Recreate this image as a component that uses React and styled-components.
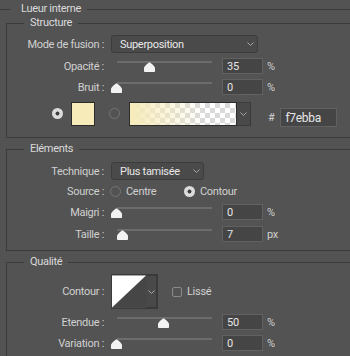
import React from 'react';
import styled, { createGlobalStyle } from 'styled-components';

const GlobalStyle = createGlobalStyle`
  html, body {
    margin: 0;
    background: #535353;
    overflow: hidden;
  }
  body {
    font-family: Roboto, "Liberation Sans", sans-serif;
    font-size: 11px;
    letter-spacing: -0.3px;
    color: #d0d0d0;
  }
`;

const Panel = styled.div`
  width: 350px;
  height: 356px;
  overflow: hidden;
`;

const Outer = styled.fieldset`
  margin: 2px 0 0 -1px;
  padding: 0 0 0 6px;
  min-width: 0;
  border: 1px solid #3b3b3b;
  border-right: none;
  border-bottom: none;
`;

const Group = styled.fieldset`
  margin: ${({ $first }) => ($first ? 0 : 4)}px 0 0;
  padding: ${({ $pt }) => $pt}px 0 ${({ $pb }) => $pb}px;
  min-width: 0;
  border: 1px solid #3b3b3b;
  border-right: none;
`;

const Legend = styled.legend`
  margin-left: ${({ $ml }) => $ml}px;
  padding: 0 6px 0 ${({ $pl }) => $pl}px;
  line-height: 14px;
  color: #dadada;
`;

const Row = styled.div`
  display: flex;
  align-items: center;
  height: ${({ $h }) => $h || 16}px;
  margin-top: ${({ $mt }) => $mt || 0}px;
`;

const Label = styled.span`
  flex: none;
  box-sizing: border-box;
  width: 104px;
  padding-right: 7px;
  text-align: right;
  white-space: nowrap;
`;

const Select = styled.div`
  flex: none;
  display: flex;
  align-items: center;
  justify-content: space-between;
  box-sizing: border-box;
  width: ${({ $w }) => $w}px;
  height: 18px;
  padding: 0 3px 0 8px;
  border: 1px solid #3c3c3c;
  border-radius: 3px;
  background: #4a4a4a;
  color: #e8e8e8;
`;

const Chevron = () => (
  <svg width="7" height="4" viewBox="0 0 7 4">
    <polyline points="0.5,0.5 3.5,3.5 6.5,0.5" fill="none" stroke="#a8a8a8" strokeWidth="1" />
  </svg>
);

const SliderBox = styled.div`
  position: relative;
  flex: none;
  width: 107px;
  height: 16px;
  align-self: flex-start;
`;

const Track = styled.div`
  margin: 3px 6px 0;
  height: 2px;
  background: #6c6c6c;
`;

const Thumb = styled.svg`
  position: absolute;
  top: 4px;
  width: 11px;
  height: 10px;
`;

const Slider = ({ pct }) => (
  <SliderBox>
    <Track />
    <Thumb viewBox="0 0 11 10" style={{ left: pct * 95 }}>
      <path d="M5.5 0.3 C6.3 0.3 11 4.6 11 5.8 V9.2 Q11 10 10.2 10 H0.8 Q0 10 0 9.2 V5.8 C0 4.6 4.7 0.3 5.5 0.3 Z" fill="#f2f2f2" />
    </Thumb>
  </SliderBox>
);

const Field = styled.input`
  flex: none;
  box-sizing: border-box;
  width: ${({ $w }) => $w || 41}px;
  height: ${({ $h }) => $h || 16}px;
  margin: ${({ $m }) => $m || '0 0 0 4px'};
  padding: 0 0 0 4px;
  border: 1px solid #616161;
  background: #454545;
  color: #e6e6e6;
  font-family: inherit;
  font-size: ${({ $fs }) => $fs || 11}px;
  letter-spacing: inherit;
  outline: none;
`;

const Unit = styled.span`
  margin-left: 4px;
`;

const Radio = styled.span`
  flex: none;
  box-sizing: border-box;
  width: 11px;
  height: 11px;
  border-radius: 50%;
  margin-left: ${({ $ml }) => $ml || 0}px;
  margin-top: ${({ $mt }) => $mt || 0}px;
  ${({ $on }) =>
    $on
      ? 'background: radial-gradient(circle, #3f3f3f 0 1.7px, #dcdcdc 2.3px);'
      : 'border: 1px solid #747474;'}
`;

const Option = styled.span`
  display: flex;
  align-items: center;
  gap: 5px;
  width: ${({ $w }) => ($w ? `${$w}px` : 'auto')};
  margin-left: ${({ $ml }) => $ml || 0}px;
`;

const ColorRow = styled.div`
  display: flex;
  align-items: flex-start;
  height: 25px;
  margin-top: 7px;
`;

const Swatch = styled.div`
  flex: none;
  box-sizing: border-box;
  width: 24px;
  height: 24px;
  margin-left: 8px;
  border: 1px solid #2c2c2c;
  background: #f7ebba;
`;

const GradientBox = styled.div`
  flex: none;
  box-sizing: border-box;
  width: 108px;
  height: 24px;
  margin-left: 9px;
  border: 1px solid #2c2c2c;
  background-color: #fff;
  background-image: linear-gradient(to right, #f7ebba, rgba(247, 235, 186, 0) 70%),
    linear-gradient(45deg, #dadada 25%, transparent 25%, transparent 75%, #dadada 75%),
    linear-gradient(45deg, #dadada 25%, transparent 25%, transparent 75%, #dadada 75%);
  background-size: 100% 100%, 10px 10px, 10px 10px;
  background-position: 0 0, 0 0, 5px 5px;
`;

const DropButton = styled.div`
  flex: none;
  display: flex;
  align-items: center;
  justify-content: center;
  box-sizing: border-box;
  width: ${({ $w }) => $w || 14}px;
  height: ${({ $h }) => $h || 24}px;
  border: 1px solid #3a3a3a;
  border-left: none;
  background: #494949;
`;

const Hash = styled.span`
  margin: 6px 0 0 17px;
  line-height: 19px;
`;

const Picker = styled.div`
  flex: none;
  display: flex;
  box-sizing: border-box;
  width: 47px;
  height: 35px;
  border: 1px solid #3a3a3a;
`;

const Curve = styled.svg`
  display: block;
  width: 35px;
  height: 33px;
`;

const Check = styled.span`
  flex: none;
  box-sizing: border-box;
  width: 10px;
  height: 10px;
  margin-left: 14px;
  border: 1px solid #8a8a8a;
  border-radius: 2px;
`;

const CheckText = styled.span`
  margin-left: 5px;
`;

const SliderRow = ({ label, pct, value, unit, mt }) => (
  <Row $mt={mt}>
    <Label>{label}</Label>
    <Slider pct={pct} />
    <Field readOnly value={value} />
    <Unit>{unit}</Unit>
  </Row>
);

export default function App() {
  return (
    <Panel>
      <GlobalStyle />
      <Outer>
        <Legend $ml={4} $pl={11}>Lueur interne</Legend>

        <Group $first $pt={5} $pb={10}>
          <Legend $ml={17} $pl={6}>Structure</Legend>
          <Row $h={18}>
            <Label>Mode de fusion :</Label>
            <Select $w={147}>
              Superposition
              <Chevron />
            </Select>
          </Row>
          <SliderRow label="Opacité :" pct={0.35} value="35" unit="%" mt={5} />
          <SliderRow label="Bruit :" pct={0} value="0" unit="%" mt={5} />
          <ColorRow>
            <Radio $on $ml={45} $mt={6} />
            <Swatch />
            <Radio $ml={14} $mt={6} />
            <GradientBox />
            <DropButton>
              <Chevron />
            </DropButton>
            <Hash>#</Hash>
            <Field readOnly value="f7ebba" $w={57} $h={19} $fs={12} $m="6px 0 0 6px" />
          </ColorRow>
        </Group>

        <Group $pt={6} $pb={8}>
          <Legend $ml={17} $pl={6}>Eléments</Legend>
          <Row $h={18}>
            <Label>Technique :</Label>
            <Select $w={93}>
              Plus tamisée
              <Chevron />
            </Select>
          </Row>
          <Row $h={14} $mt={4}>
            <Label>Source :</Label>
            <Option $w={74} $ml={-1}>
              <Radio />
              Centre
            </Option>
            <Option>
              <Radio $on />
              Contour
            </Option>
          </Row>
          <SliderRow label="Maigri :" pct={0} value="0" unit="%" mt={6} />
          <SliderRow label="Taille :" pct={0.068} value="7" unit="px" mt={6} />
        </Group>

        <Group $pt={5} $pb={10}>
          <Legend $ml={17} $pl={6}>Qualité</Legend>
          <Row $h={35}>
            <Label>Contour :</Label>
            <Picker>
              <Curve viewBox="0 0 35 33">
                <rect width="35" height="33" fill="#464646" />
                <polygon points="0,0 35,0 0,33" fill="#ffffff" />
              </Curve>
              <DropButton $w={11} $h={33}>
                <Chevron />
              </DropButton>
            </Picker>
            <Check />
            <CheckText>Lissé</CheckText>
          </Row>
          <SliderRow label="Etendue :" pct={0.49} value="50" unit="%" mt={5} />
          <SliderRow label="Variation :" pct={0} value="0" unit="%" mt={5} />
        </Group>
      </Outer>
    </Panel>
  );
}
